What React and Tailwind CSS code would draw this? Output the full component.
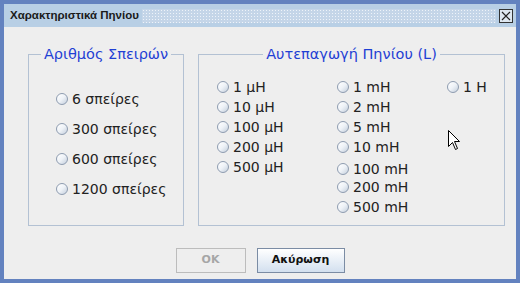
import React from "react";

const font = "font-['DejaVu_Sans','Liberation_Sans',sans-serif]";

function Radio({ label, className = "" }) {
  return (
    <div className={`flex items-center gap-[4px] ${className}`}>
      <span className="w-[12px] h-[12px] rounded-full border border-[#8e9cb0] bg-linear-to-br from-white via-[#eef2f7] to-[#c3cedc] shrink-0" />
      <span className="text-[14px] text-[#222] leading-none whitespace-nowrap">{label}</span>
    </div>
  );
}

function Group({ title, className, children }) {
  return (
    <fieldset className={`border border-[#b3c1d3] ${className}`}>
      <legend className="mx-auto px-[3px] text-[14.5px] leading-[18px] text-[#1f40d4]">{title}</legend>
      {children}
    </fieldset>
  );
}

function Cursor() {
  return (
    <svg className="absolute left-[444px] top-[103px]" width="13" height="21" viewBox="0 0 13 21">
      <path d="M0.5 0.5 L0.5 16.5 L4.5 12.5 L7.5 19.5 L9.5 18.5 L6.5 11.5 L11.5 11.5 Z" fill="#fff" stroke="#000" strokeWidth="1" />
    </svg>
  );
}

export default function App() {
  return (
    <div className={`w-[520px] h-[283px] bg-[#6382bf] p-[4px] flex flex-col ${font}`}>
      <div className="h-[23px] bg-[#b8cfe5] flex items-center pl-[6px] pr-[3px] gap-[3px]">
        <span className="text-[11.5px] font-bold text-[#1a1a1a] whitespace-nowrap font-['Liberation_Sans',sans-serif]">Χαρακτηριστικά Πηνίου</span>
        <div className="flex-1 h-[14px] bg-[#c4d5e8] bg-[radial-gradient(circle,#eef3f9_0.9px,transparent_1px)] bg-size-[3px_3px]" />
        <div className="w-[14px] h-[14px] border border-[#333] bg-[#dfe8f1] flex items-center justify-center">
          <svg width="10" height="10" viewBox="0 0 10 10">
            <path d="M1 1 L9 9 M9 1 L1 9" stroke="#222" strokeWidth="1.2" />
          </svg>
        </div>
      </div>
      <div className="flex-1 bg-[#eeeeee] relative flex flex-col">
        <div className="flex gap-[14px] pl-[24px] pt-[18px]">
          <Group title="Αριθμός Σπειρών" className="w-[156px] h-[181px]">
            <div className="flex flex-col pl-[27px] pt-[21px]">
              <Radio label="6 σπείρες" className="h-[30px]" />
              <Radio label="300 σπείρες" className="h-[30px]" />
              <Radio label="600 σπείρες" className="h-[30px]" />
              <Radio label="1200 σπείρες" className="h-[30px]" />
            </div>
          </Group>
          <Group title="Αυτεπαγωγή Πηνίου (L)" className="w-[307px] h-[181px]">
            <div className="flex pl-[18px] pt-[14px]">
              <div className="w-[120px] flex flex-col">
                <Radio label="1 μH" className="h-[20px]" />
                <Radio label="10 μH" className="h-[20px]" />
                <Radio label="100 μH" className="h-[20px]" />
                <Radio label="200 μH" className="h-[20px]" />
                <Radio label="500 μH" className="h-[20px]" />
              </div>
              <div className="w-[110px] flex flex-col">
                <Radio label="1 mH" className="h-[20px]" />
                <Radio label="2 mH" className="h-[20px]" />
                <Radio label="5 mH" className="h-[20px]" />
                <Radio label="10 mH" className="h-[20px]" />
                <Radio label="100 mH" className="h-[20px] mt-[2px]" />
                <Radio label="200 mH" className="h-[20px] -mt-[2px]" />
                <Radio label="500 mH" className="h-[20px]" />
              </div>
              <div className="flex flex-col">
                <Radio label="1 H" className="h-[20px]" />
              </div>
            </div>
          </Group>
        </div>
        <div className="flex justify-center gap-[11px] mt-[22px]">
          <button className="w-[70px] h-[25px] border border-[#bcbcbc] bg-[#eeeeee] text-[11px] font-bold text-[#a6a6a6]">OK</button>
          <button className="w-[88px] h-[25px] border border-[#7b8ca4] bg-linear-to-b from-white to-[#d3e0ef] text-[11px] font-bold text-[#111]">Ακύρωση</button>
        </div>
        <Cursor />
      </div>
    </div>
  );
}
